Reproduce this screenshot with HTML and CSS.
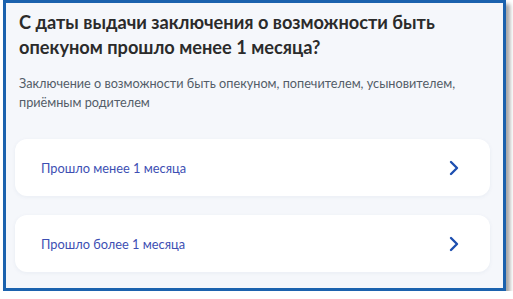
FILE: index.html
```html
<!DOCTYPE html>
<html lang="ru">
<head>
  <meta charset="UTF-8">
  <title>Заключение</title>
  <link rel="stylesheet" href="styles.css">
</head>
<body>

  <div class="frame">
    <h2 class="title">С даты выдачи заключения о возможности быть опекуном прошло менее 1 месяца?</h2>
    <p class="hint">Заключение о возможности быть опекуном, попечителем, усыновителем, приёмным родителем</p>

    <div class="options">
      <a class="option" href="#">
        <span>Прошло менее 1 месяца</span>
        <svg class="chevron" width="10" height="16" viewBox="0 0 10 16"><path d="M2 2l6 6-6 6" fill="none" stroke="#1d4fb0" stroke-width="2.4" stroke-linecap="round" stroke-linejoin="round"/></svg>
      </a>
      <a class="option" href="#">
        <span>Прошло более 1 месяца</span>
        <svg class="chevron" width="10" height="16" viewBox="0 0 10 16"><path d="M2 2l6 6-6 6" fill="none" stroke="#1d4fb0" stroke-width="2.4" stroke-linecap="round" stroke-linejoin="round"/></svg>
      </a>
    </div>
  </div>

</body>
</html>
```

FILE: styles.css
```css
body {
  margin: 0;
  background: #fff;
  font-family: Lato, "Noto Sans", sans-serif;
}
.frame {
  box-sizing: border-box;
  width: 503px;
  height: 291px;
  margin-left: 3px;
  padding: 7px 13px 0 13px;
  border: 3px solid #1b62ae;
  background: #f5f7fb;
  box-shadow: 4px 4px 4px rgba(0, 0, 0, 0.35);
}
.title {
  margin: 0;
  font-size: 18.2px;
  line-height: 25px;
  font-weight: 700;
  color: #2b2b2b;
}
.hint {
  margin: 14px 0 0;
  font-size: 12.7px;
  line-height: 19px;
  color: #535d68;
}
.options {
  display: flex;
  flex-direction: column;
  gap: 19px;
  margin: 27px 0 0 -4px;
}
.option {
  display: flex;
  align-items: center;
  justify-content: space-between;
  height: 57px;
  padding: 0 31px 0 26px;
  background: #fff;
  border-radius: 12px;
  box-shadow: 0 1px 4px rgba(30, 60, 120, 0.06);
  text-decoration: none;
  font-size: 12.8px;
  color: #3d4fb3;
}
```
